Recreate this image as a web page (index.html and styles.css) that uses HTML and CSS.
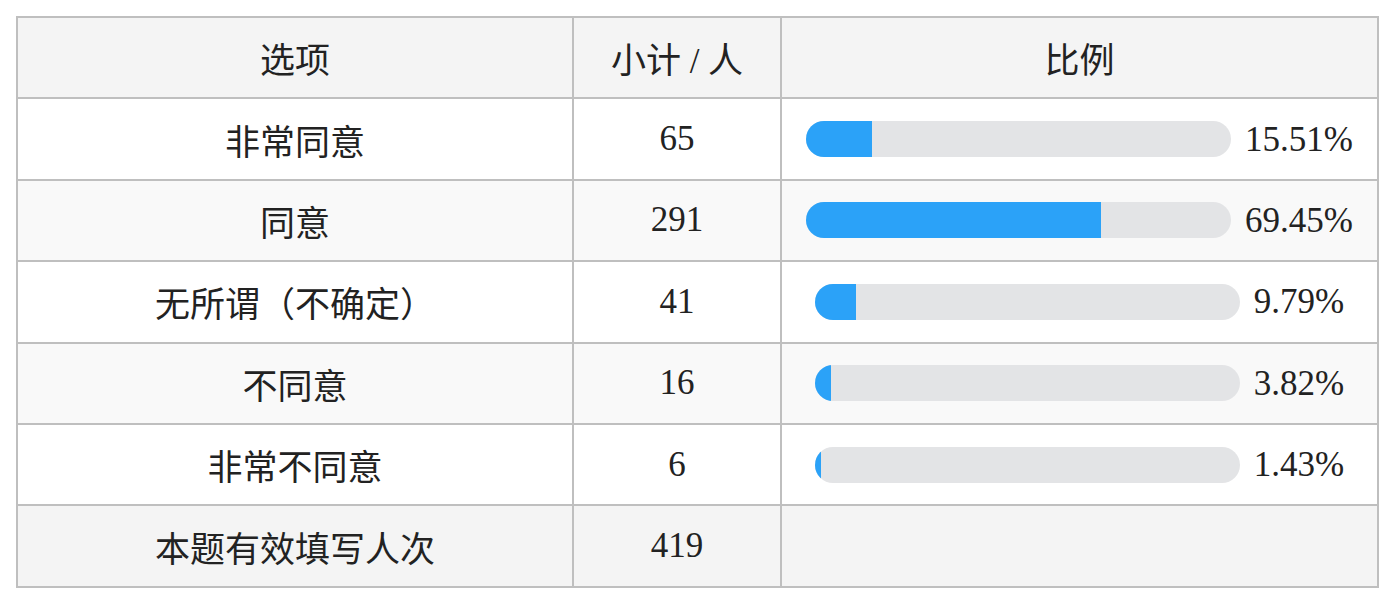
FILE: index.html
```html
<!DOCTYPE html>
<html lang="zh-CN">
<head>
<meta charset="utf-8">
<title>统计表</title>
<link rel="stylesheet" href="styles.css">
</head>
<body>
<table class="stats">
  <colgroup>
    <col class="c-opt">
    <col class="c-num">
    <col class="c-pct">
  </colgroup>
  <thead>
    <tr><th>选项</th><th>小计 / 人</th><th>比例</th></tr>
  </thead>
  <tbody>
    <tr>
      <td>非常同意</td><td>65</td>
      <td><div class="ratio"><div class="track"><div class="fill" style="width:15.51%"></div></div><span class="pct">15.51%</span></div></td>
    </tr>
    <tr>
      <td>同意</td><td>291</td>
      <td><div class="ratio"><div class="track"><div class="fill" style="width:69.45%"></div></div><span class="pct">69.45%</span></div></td>
    </tr>
    <tr>
      <td>无所谓（不确定）</td><td>41</td>
      <td><div class="ratio"><div class="track"><div class="fill" style="width:9.79%"></div></div><span class="pct">9.79%</span></div></td>
    </tr>
    <tr>
      <td>不同意</td><td>16</td>
      <td><div class="ratio"><div class="track"><div class="fill" style="width:3.82%"></div></div><span class="pct">3.82%</span></div></td>
    </tr>
    <tr>
      <td>非常不同意</td><td>6</td>
      <td><div class="ratio"><div class="track"><div class="fill" style="width:1.43%"></div></div><span class="pct">1.43%</span></div></td>
    </tr>
  </tbody>
  <tfoot>
    <tr><td>本题有效填写人次</td><td>419</td><td></td></tr>
  </tfoot>
</table>
</body>
</html>
```
FILE: styles.css
```css
html, body {
  margin: 0;
  padding: 0;
  background: #ffffff;
}
body {
  padding: 16px 0 0 16px;
  font-family: "Liberation Serif", "Noto Sans CJK SC", serif;
  color: #222222;
}
.stats {
  border-collapse: collapse;
  width: 1361px;
  table-layout: fixed;
  font-size: 35px;
}
.c-opt { width: 556px; }
.c-num { width: 208px; }
.c-pct { width: 597px; }
.stats th,
.stats td {
  border: 2px solid #bfbfbf;
  height: 79.4px;
  padding: 0;
  text-align: center;
  vertical-align: middle;
  font-weight: normal;
}
.stats thead tr { background: #f4f4f4; }
.stats tbody tr:nth-child(odd) { background: #ffffff; }
.stats tbody tr:nth-child(even) { background: #f9f9f9; }
.stats tfoot tr { background: #f4f4f4; }
.ratio {
  display: flex;
  align-items: center;
  justify-content: center;
  gap: 14px;
}
.track {
  width: 425px;
  height: 36px;
  border-radius: 18px;
  background: #e3e4e6;
  overflow: hidden;
}
.fill {
  height: 100%;
  background: #2ba2f8;
}
.pct {
  line-height: 1;
}
```
